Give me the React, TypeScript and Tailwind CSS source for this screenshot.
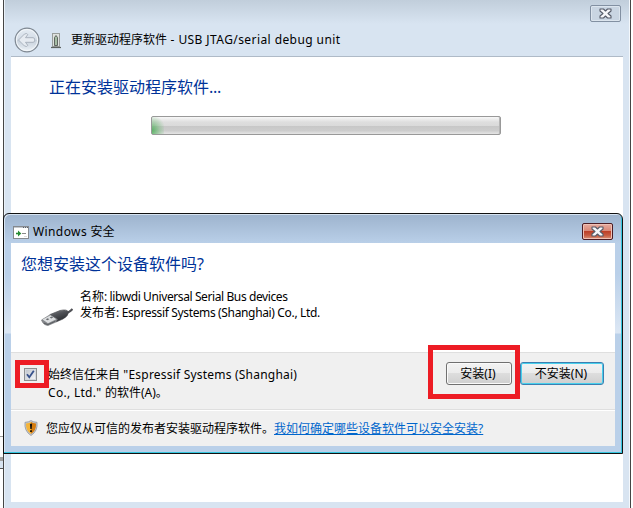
import type { ReactNode } from "react";

const cjk = "font-['Noto_Sans_CJK_SC',sans-serif]";

function L({ children, className = "" }: { children: ReactNode; className?: string }) {
  return <span className={`whitespace-pre font-['Noto_Sans','Noto_Sans_CJK_SC',sans-serif] ${className}`}>{children}</span>;
}

function CloseGlyph() {
  return (
    <svg width="13" height="11" viewBox="0 0 13 11">
      <path d="M1 1h3.5l2 2 2-2H12v2L9 5.5 12 8v2H8.5l-2-2-2 2H1V8l3-2.500L1 3z" fill="#f6f7fa" stroke="#555b68" strokeWidth="1.100" strokeLinejoin="round" />
    </svg>
  );
}

function BackButton() {
  return (
    <svg width="26" height="26" viewBox="0 0 26 26" className="shrink-0">
      <defs>
        <linearGradient id="orb" x1="0" y1="0" x2="0" y2="1">
          <stop offset="0" stopColor="#e6edf4" />
          <stop offset=".48" stopColor="#d3dce6" />
          <stop offset=".5" stopColor="#c5cfda" />
          <stop offset="1" stopColor="#eef3f8" />
        </linearGradient>
      </defs>
      <circle cx="13" cy="13" r="11.800" fill="url(#orb)" stroke="#7f8892" strokeWidth="1.200" />
      <circle cx="13" cy="13" r="10.600" fill="none" stroke="#f3f7fa" />
      <path d="M4.500 13l6-6q2.500-1.200 3.300.6L11.500 10.700H19q1.800 0 1.800 2.300T19 15.300h-7.500l2.300 3.100q-.8 1.800-3.300.6z" fill="#e6ebf1" stroke="#a5aeb9" strokeWidth=".9" strokeLinejoin="round" />
    </svg>
  );
}

function DeviceIcon() {
  return (
    <svg width="10" height="16" viewBox="0 0 10 16" className="shrink-0">
      <rect x="1.500" y=".5" width="7" height="13" fill="#dfe2df" stroke="#989d9b" />
      <path d="M3.500 12.500V4.500L5 2.500l1.500 2v8z" fill="#a5bda5" stroke="#535955" strokeWidth=".9" />
      <path d="M0 14.500h10" stroke="#5c6260" strokeWidth="1.200" />
    </svg>
  );
}

function InstallerIcon() {
  return (
    <svg width="16" height="13" viewBox="0 0 16 13" className="shrink-0">
      <rect x=".5" y=".5" width="15" height="12" fill="#fff" stroke="#85898e" />
      <path d="M1 1.500h14" stroke="#c2c7cd" />
      <path d="M10 1.500h1M12 1.500h1M14 1.500h1" stroke="#59616b" />
      <path d="M3 7.500h3" stroke="#238a30" strokeWidth="1.600" />
      <path d="M5 4.500v6l3.300-3z" fill="#238a30" />
      <path d="M9 7.500h4" stroke="#888" />
      <path d="M11 10.500h3" stroke="#ddd" />
    </svg>
  );
}

function UsbPlug() {
  return (
    <svg width="32" height="18" viewBox="0 0 32 18" className="shrink-0">
      <defs>
        <linearGradient id="plug" x1="0" y1="0" x2=".5" y2="1">
          <stop offset="0" stopColor="#85878b" />
          <stop offset=".45" stopColor="#505257" />
          <stop offset="1" stopColor="#292b2f" />
        </linearGradient>
      </defs>
      <path d="M24 5Q28 5 31.500 1" fill="none" stroke="#505156" strokeWidth="2" />
      <path d="M9 6.500L19 2.500Q26 .8 27.500 4Q27.500 8 22 11L15 14z" fill="url(#plug)" stroke="#45474b" strokeWidth=".6" />
      <path d="M.5 12L9 6.800l7.500 4.400-1.500 2.800-8 3.500Q2 17 .5 12z" fill="#84878b" stroke="#707276" strokeWidth=".6" />
      <path d="M1.500 11.600L9.500 7.300l5.800 3.900-8.300 4z" fill="#dcdee0" />
      <path d="M4.800 11.300l2-1 1.500 1-2 1zM8.700 9.600l2-1 1.500 1-2 1z" fill="#696c70" />
      <path d="M3 15.200l3.800 1.400 7.200-3.200" fill="none" stroke="#4a4d52" strokeWidth=".7" />
    </svg>
  );
}

function ShieldIcon() {
  return (
    <svg width="14" height="16" viewBox="0 0 14 16" className="shrink-0">
      <path d="M7 .6Q9.500 2.300 13 2.300Q14 11 7 15.500Q0 11 1 2.300Q4.500 2.300 7 .6z" fill="#c8cbd0" stroke="#8f949b" strokeWidth=".8" />
      <path d="M7 2Q9 3.300 12 3.500Q12.500 10.500 7 14Z" fill="#d57c0e" />
      <path d="M7 2Q5 3.300 2 3.500Q1.500 10.500 7 14Z" fill="#f4b439" />
      <path d="M5.900 3.800h2.200L7.700 9H6.300zM6.100 10.200h1.800v1.900H6.100z" fill="#17120b" />
    </svg>
  );
}

function DesktopEdge() {
  return (
    <div className="absolute left-0 top-[436px] w-[3px]">
      <div className="h-[21px] border-t border-[#9c9c9c] bg-[#fafafa]" />
      <div className="h-[4px] bg-[#a0a0a0]" />
      <div className="h-[8px] border-b border-[#555] bg-[#d8e4f1]" />
    </div>
  );
}

function UpdateWindow() {
  return (
    <section className="absolute left-[3px] top-0 flex h-[508px] w-[628px] flex-col border-x border-[#454545] bg-[linear-gradient(#c1cedb_0px,#d8e4f1_24px)] px-[1px] shadow-[inset_-1px_0_0_#f4f8fc,inset_1px_0_0_#eaf1f8]">
      <header className="relative flex h-[56px] shrink-0 items-end pb-[3px] pl-[9px]">
        <BackButton />
        <div className="mb-[4px] ml-[11px]"><DeviceIcon /></div>
        <h1 className={`mb-[5px] ml-[10px] text-[12px] leading-[16px] ${cjk}`}>
          更新驱动程序软件<L className="tracking-[0.42px]"> - USB JTAG/serial debug unit</L>
        </h1>
        <button className="absolute right-[8px] top-[5px] flex h-[17px] w-[31px] items-center justify-center rounded-[2px] border border-[#8290a2] bg-[#c9d5e2] shadow-[inset_0_0_0_1px_#dce5ee]">
          <CloseGlyph />
        </button>
      </header>
      <main className="mx-[6px] h-[446px] border-t border-[#afbac7] bg-white pl-[38px] pt-[17px]">
        <h2 className={`text-[16px] leading-[24px] text-[#003399] ${cjk}`}>正在安装驱动程序软件<L className="tracking-[-0.3px]">...</L></h2>
        <div className="ml-[102px] mt-[17px] h-[19px] w-[350px] rounded-[2px] border border-[#999] bg-[linear-gradient(#f8f8f8_0%,#dedede_30%,#dadada_52%,#c7c7c7_54%,#cdcdcd_80%,#e5e5e5_100%)] shadow-[inset_-1px_0_0_#b5b5b5]">
          <div className="h-full w-[12px] bg-[radial-gradient(ellipse_at_0%_80%,#43ac50cc,#78bd7e77_45%,transparent_80%)]" />
        </div>
      </main>
    </section>
  );
}

function SecurityDialog() {
  return (
    <section className="absolute left-[3px] top-[213px] flex h-[241px] w-[620px] flex-col rounded-t-[6px] border border-[#111] bg-[linear-gradient(#9db3cd_0px,#bad0e9_30px,#bad0e9_60px,#dce7f4_119px,#bad0e9_120px)] px-[7px] pb-[7px] shadow-[inset_-1px_-1px_0_#35c6df,inset_1px_1px_0_#d7e4f2]">
      <header className="flex h-[29px] shrink-0 items-center pl-[2px] pt-[7px]">
        <InstallerIcon />
        <h1 className={`-mt-[2px] ml-[4px] text-[12px] leading-[16px] ${cjk}`}><L className="tracking-[0.4px]">Windows </L>安全</h1>
        <button className="ml-auto mr-[2px] mt-[-1px] flex h-[17px] w-[31px] items-center justify-center rounded-[2px] border border-[#4c1c23] bg-[linear-gradient(#e7aca0_0%,#d98776_47%,#bd4028_50%,#c65a40_75%,#dc9277_100%)] shadow-[inset_0_0_0_1px_#efc1b6]">
          <CloseGlyph />
        </button>
      </header>
      <div className="flex h-[203px] flex-col bg-white">
        <div className="h-[109px] pl-[10px] pt-[8px]">
          <h2 className={`text-[16px] leading-[24px] text-[#003399] ${cjk}`}>您想安装这个设备软件吗<L>?</L></h2>
          <div className="flex pl-[20px] pt-[12px]">
            <div className="mt-[20px]"><UsbPlug /></div>
            <div className={`ml-[7px] text-[12px] leading-[15px] ${cjk}`}>
              <p>名称<L className="tracking-[-0.4px]">: libwdi Universal Serial Bus devices</L></p>
              <p>发布者<L className="tracking-[-0.35px]">: Espressif Systems (Shanghai) Co., Ltd.</L></p>
            </div>
          </div>
        </div>
        <div className="flex h-[57px] border-t border-[#dfdfdf] bg-[#f0f0f0]">
          <div className="-mr-[1px] ml-[4px] mt-[7px] flex h-[28px] w-[34px] items-center justify-center border-[5px] border-[#ed1c24]">
            <span className="ml-[-3px] flex h-[13px] w-[13px] items-center justify-center border border-[#8d8f91] bg-[#f4f4f4]">
              <span className="flex h-[9px] w-[9px] items-center justify-center bg-[linear-gradient(135deg,#c2c7ce,#f3f4f6)] shadow-[0_0_0_1px_#d5d9de]">
                <svg width="9" height="9" viewBox="0 0 9 9"><path d="M1 4.200L3.300 7.300 7.800.7" fill="none" stroke="#37518b" strokeWidth="1.800" /></svg>
              </span>
            </span>
          </div>
          <label className={`mt-[12px] w-[280px] text-[12px] leading-[17px] ${cjk}`}>
            始终信任来自<L className="tracking-[0.21px]"> "Espressif Systems (Shanghai)</L><br />
            <L className="tracking-[0.3px]">Co., Ltd." </L>的软件<L>(A)</L>。
          </label>
          <div className="-mt-[8px] ml-[100px] flex h-[54px] w-[92px] shrink-0 items-center border-[5px] border-[#ed1c24] pl-[13px] pt-[3px]">
            <button className={`h-[23px] w-[66px] rounded-[3px] border border-[#707070] bg-[linear-gradient(#f3f3f3_0%,#ebebeb_49%,#dddddd_50%,#cfcfcf_100%)] pr-[2px] text-[12px] leading-[20px] shadow-[inset_0_0_0_1px_#fafafa] ${cjk}`}>安装<L>(I)</L></button>
          </div>
          <button className={`mt-[9px] h-[23px] w-[84px] shrink-0 rounded-[3px] border border-[#3c7fb1] bg-[linear-gradient(#f3f3f3_0%,#ebebeb_49%,#dddddd_50%,#cfcfcf_100%)] pr-[2px] text-[12px] leading-[20px] shadow-[inset_0_0_0_1px_#48d0ed] ${cjk}`}>不安装<L>(N)</L></button>
        </div>
        <footer className={`flex h-[37px] items-center border-t border-[#dfdfdf] bg-[#f0f0f0] pl-[13px] text-[12px] leading-[16px] shadow-[inset_0_1px_0_white] ${cjk}`}>
          <ShieldIcon />
          <p className="ml-[8px] whitespace-nowrap">您应仅从可信的发布者安装驱动程序软件。<a className="text-[#0066cc] underline underline-offset-[1px]">我如何确定哪些设备软件可以安全安装<L>?</L></a></p>
        </footer>
      </div>
    </section>
  );
}

export default function App() {
  return (
    <div className="relative h-[508px] w-[633px] overflow-hidden bg-white text-black">
      <DesktopEdge />
      <UpdateWindow />
      <SecurityDialog />
    </div>
  );
}
